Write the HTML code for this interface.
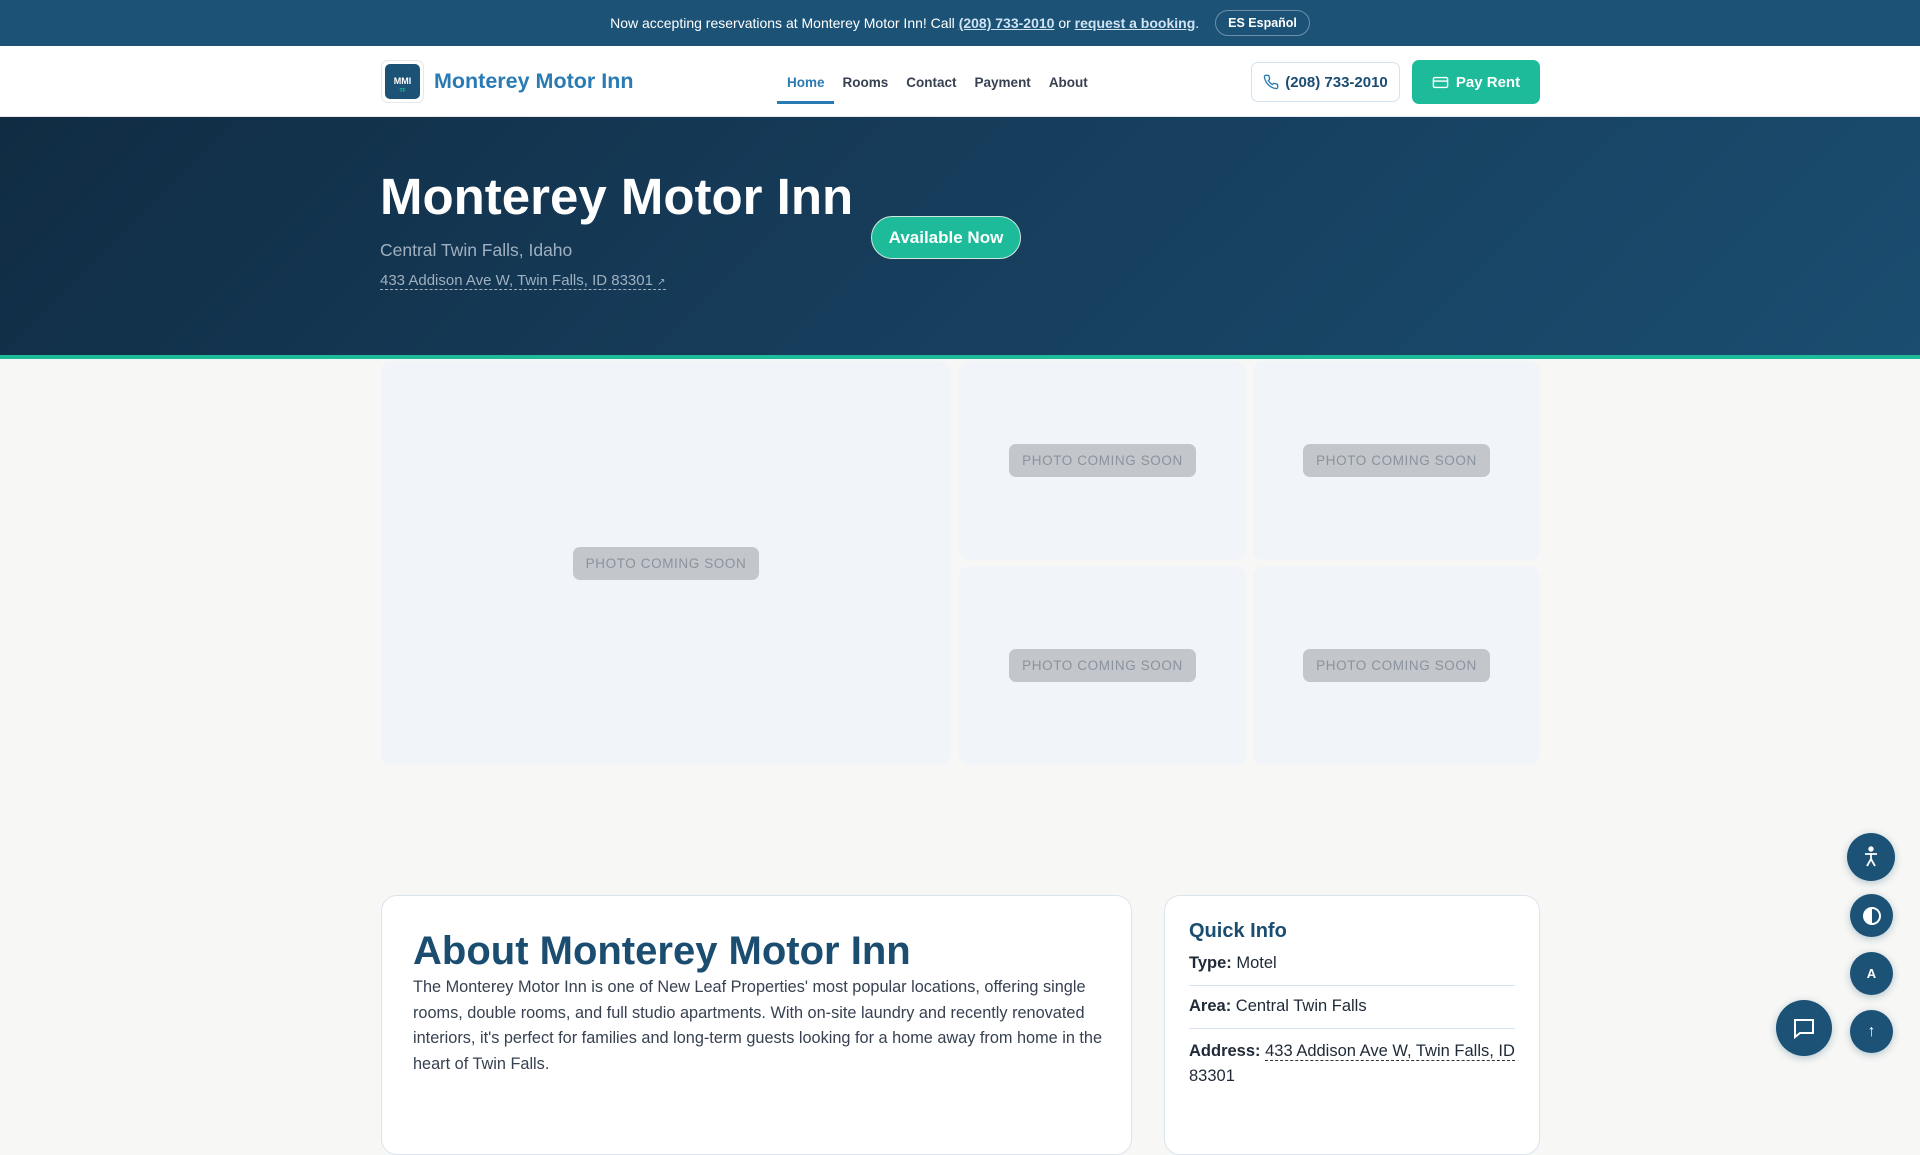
<!DOCTYPE html>
<html><head><meta charset="utf-8"><style>
*{box-sizing:border-box;margin:0;padding:0}
body{width:1920px;height:1080px;overflow:hidden;background:#f7f7f5;font-family:"Liberation Sans",sans-serif;position:relative}
.a{position:absolute}
.top{left:0;top:0;width:1920px;height:46px;background:#1b5276;color:#fff;font-size:14px;display:flex;align-items:center;justify-content:center}
.top a{color:#cfe3f3;font-weight:bold;text-decoration:underline}
.es{margin-left:16px;border:1px solid #6d8fa8;border-radius:14px;padding:5px 12px;font-size:12.5px;font-weight:bold}
.nav{left:0;top:46px;width:1920px;height:71px;background:#fff;border-bottom:1px solid #e5e7eb}
.links a{font-size:13.5px;font-weight:bold;color:#374151;text-decoration:none;margin-right:18px}
.hero{left:0;top:117px;width:1920px;height:242px;background:linear-gradient(135deg,#102c43 0%,#163c5a 45%,#1a4d70 100%);border-bottom:4px solid #1dbb9a}
.tile{background:#f1f5fa;border-radius:10px;display:flex;align-items:center;justify-content:center}
.tile span{background:#c3c6cb;color:#8a939e;font-size:13.5px;letter-spacing:.6px;padding:9px 13px;border-radius:7px}
.card{background:#fff;border:1px solid #dbe4ee;border-radius:16px}
.fb{width:48px;height:48px;border-radius:50%;background:#1b5276;color:#fff;display:flex;align-items:center;justify-content:center;box-shadow:0 2px 8px rgba(27,82,118,.3)}
</style></head><body>
<div class="a top">Now accepting reservations at Monterey Motor Inn! Call&nbsp;<a>(208) 733-2010</a>&nbsp;or&nbsp;<a>request a booking</a>.<span class="es">ES Español</span></div>
<div class="a nav">
 <div class="a" style="left:381px;top:14px;width:43px;height:43px;border:1px solid #e5e7eb;border-radius:7px;padding:3px"><div style="width:35px;height:35px;background:#1b5276;border-radius:5px;color:#fff;font-size:9px;font-weight:bold;text-align:center;padding-top:13px;line-height:8px">MMI<br><span style="color:#1dbb9a;font-size:5px">TF</span></div></div>
 <div class="a" style="left:434px;top:23px;font-size:21.5px;font-weight:bold;color:#2a7ab3">Monterey Motor Inn</div>
 <div class="a links" style="left:787px;top:28px"><a style="color:#2a7ab3">Home</a><a>Rooms</a><a>Contact</a><a>Payment</a><a>About</a></div>
 <div class="a" style="left:777px;top:55px;width:57px;height:3px;background:#2a7ab3"></div>
 <div class="a" style="left:1251px;top:16px;width:149px;height:40px;border:1px solid #d3e3f0;border-radius:7px;display:flex;align-items:center;justify-content:center;font-size:15px;font-weight:bold;color:#1b4d70"><svg width="16" height="16" viewBox="0 0 24 24" fill="none" stroke="#2a7ab3" stroke-width="2" style="margin-right:6px"><path d="M22 16.9v3a2 2 0 0 1-2.2 2 19.8 19.8 0 0 1-8.6-3.1 19.5 19.5 0 0 1-6-6A19.8 19.8 0 0 1 2.1 4.2 2 2 0 0 1 4.1 2h3a2 2 0 0 1 2 1.7c.1 1 .4 1.9.7 2.8a2 2 0 0 1-.5 2.1L8 9.9a16 16 0 0 0 6 6l1.3-1.3a2 2 0 0 1 2.1-.4c.9.3 1.8.6 2.8.7a2 2 0 0 1 1.7 2z"/></svg>(208) 733-2010</div>
 <div class="a" style="left:1412px;top:14px;width:128px;height:44px;background:#1dbb9a;border-radius:7px;display:flex;align-items:center;justify-content:center;font-size:15px;font-weight:bold;color:#fff"><svg width="17" height="17" viewBox="0 0 24 24" fill="none" stroke="#fff" stroke-width="2" style="margin-right:7px"><rect x="2" y="5" width="20" height="14" rx="2"/><path d="M2 10h20"/></svg>Pay Rent</div>
</div>
<div class="a hero">
 <div class="a" style="left:380px;top:50px;font-size:51px;font-weight:bold;color:#fff">Monterey Motor Inn</div>
 <div class="a" style="left:380px;top:123px;font-size:17.5px;color:#9fb0c0">Central Twin Falls, Idaho</div>
 <div class="a" style="left:380px;top:155px;font-size:15px;color:#9fb0c0;border-bottom:1px dashed #9fb0c0">433 Addison Ave W, Twin Falls, ID 83301 <span style="font-size:10px">↗</span></div>
 <div class="a" style="left:871px;top:99px;width:150px;height:43px;border-radius:22px;background:#1dbb9a;border:1px solid #cfe9dc;color:#fff;font-size:17px;font-weight:bold;display:flex;align-items:center;justify-content:center">Available Now</div>
</div>
<div class="a tile" style="left:381px;top:361px;width:570px;height:404px"><span>PHOTO COMING SOON</span></div>
<div class="a tile" style="left:959px;top:361px;width:287px;height:199px"><span>PHOTO COMING SOON</span></div>
<div class="a tile" style="left:1253px;top:361px;width:287px;height:199px"><span>PHOTO COMING SOON</span></div>
<div class="a tile" style="left:959px;top:566px;width:287px;height:199px"><span>PHOTO COMING SOON</span></div>
<div class="a tile" style="left:1253px;top:566px;width:287px;height:199px"><span>PHOTO COMING SOON</span></div>
<div class="a card" style="left:381px;top:895px;width:751px;height:260px">
 <div class="a" style="left:31px;top:33px;font-size:40px;font-weight:bold;color:#1b4d70">About Monterey Motor Inn</div>
 <div class="a" style="left:31px;top:79px;width:690px;font-size:16.3px;line-height:25.7px;color:#374151">The Monterey Motor Inn is one of New Leaf Properties' most popular locations, offering single rooms, double rooms, and full studio apartments. With on-site laundry and recently renovated interiors, it's perfect for families and long-term guests looking for a home away from home in the heart of Twin Falls.</div>
</div>
<div class="a card" style="left:1164px;top:895px;width:376px;height:260px;padding:24px 24px 0 24px;font-size:16.5px;color:#1f2937">
 <div style="font-size:20px;font-weight:bold;color:#1b4d70;height:34px">Quick Info</div>
 <div style="height:32px;border-bottom:1px solid #d6e3ee"><b>Type:</b> Motel</div>
 <div style="padding-top:11px;height:43px;border-bottom:1px solid #d6e3ee"><b>Area:</b> Central Twin Falls</div>
 <div style="padding-top:10px;line-height:25px"><b>Address:</b> <span style="border-bottom:1px dashed #333">433 Addison Ave W, Twin Falls, ID</span> 83301</div>
</div>
<div class="a fb" style="left:1847px;top:833px"><svg width="20" height="22" viewBox="0 0 20 22" fill="none" stroke="#fff" stroke-width="1.8"><circle cx="10" cy="3" r="1.8" fill="#fff"/><path d="M4 8h12M10 7v6M10 13l-4 7M10 13l4 7"/></svg></div>
<div class="a fb" style="left:1850px;top:894px;width:43px;height:43px"><svg width="20" height="20" viewBox="0 0 20 20"><circle cx="10" cy="10" r="8" fill="none" stroke="#fff" stroke-width="2"/><path d="M10 2a8 8 0 0 0 0 16z" fill="#fff"/></svg></div>
<div class="a fb" style="left:1850px;top:952px;width:43px;height:43px;font-size:13px;font-weight:bold">A</div>
<div class="a fb" style="left:1850px;top:1010px;width:43px;height:43px;font-size:16px">↑</div>
<div class="a fb" style="left:1776px;top:1000px;width:56px;height:56px"><svg width="24" height="24" viewBox="0 0 24 24" fill="none" stroke="#fff" stroke-width="2"><path d="M3 4h18v13H8l-5 4z"/></svg></div>
</body></html>
